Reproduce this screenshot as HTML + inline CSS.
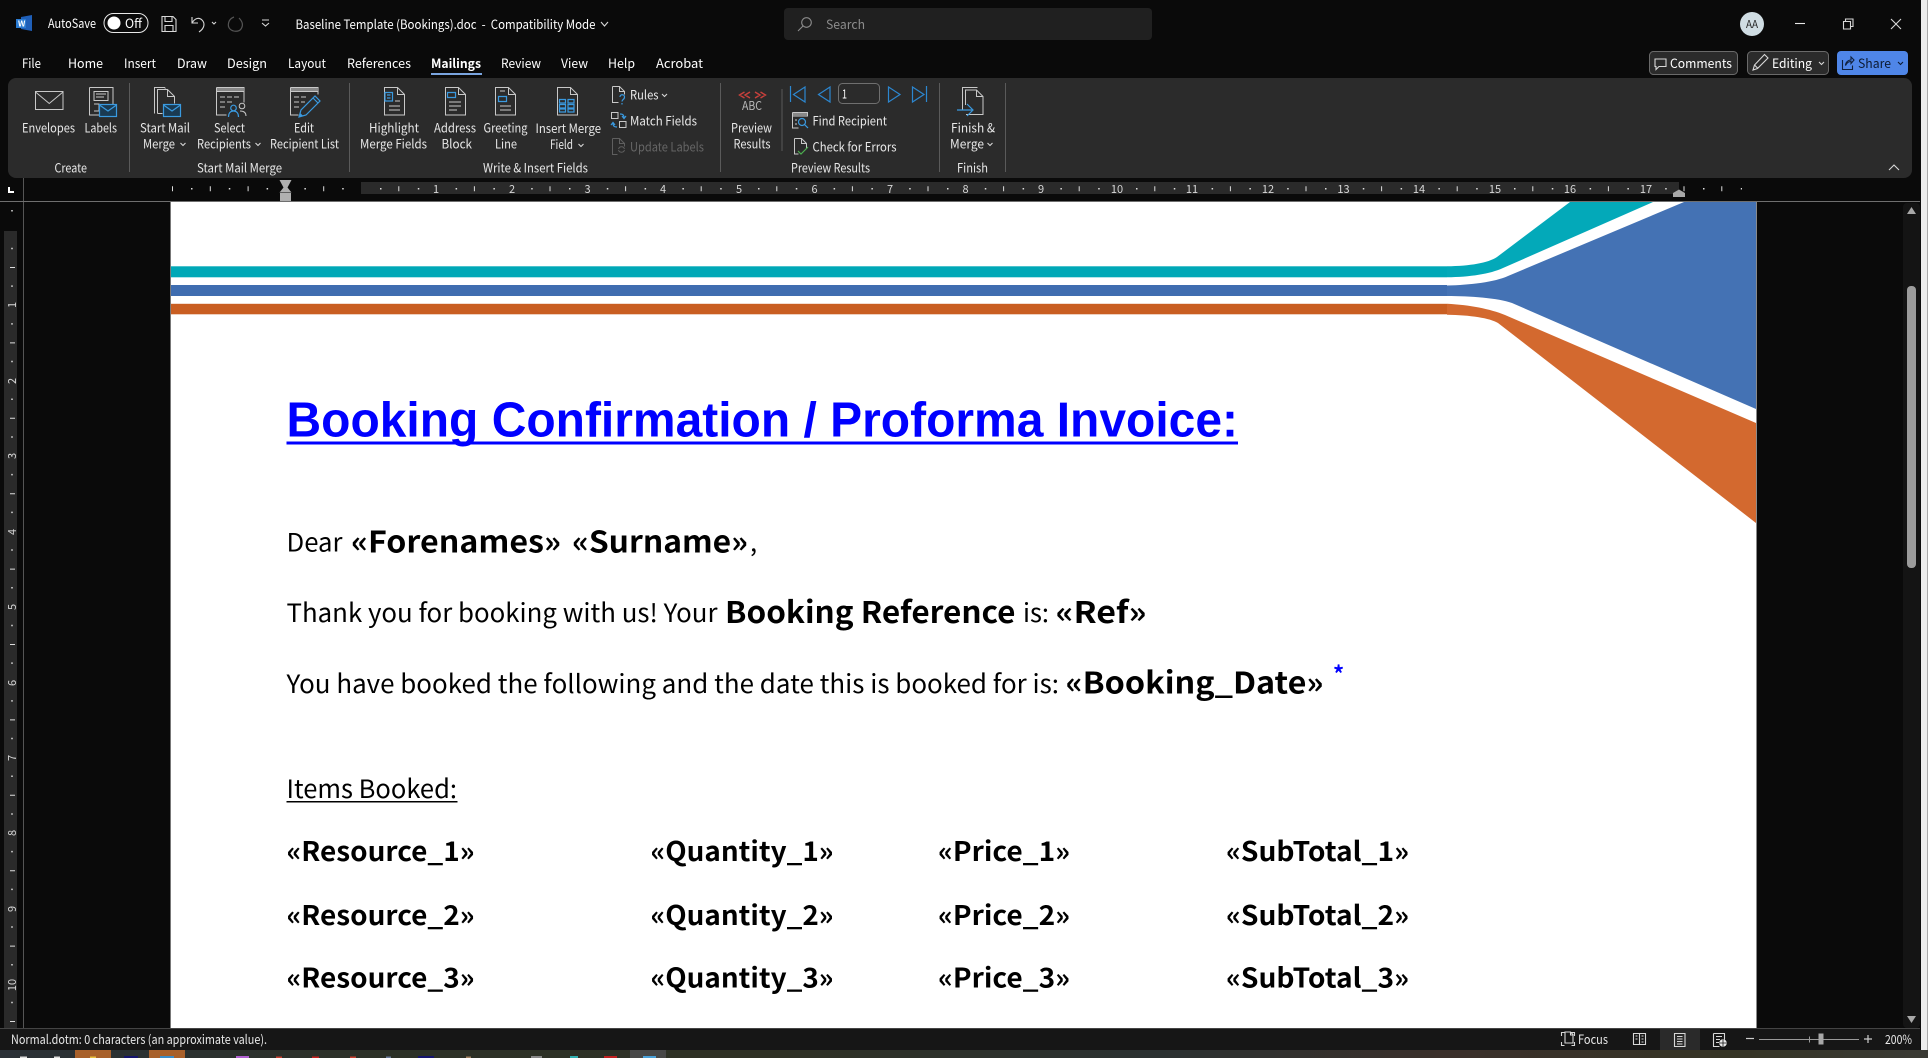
<!DOCTYPE html>
<html lang="en"><head><meta charset="utf-8"><title>Baseline Template (Bookings).doc - Word</title>
<style>
html,body{margin:0;padding:0;background:#0a0a0a;overflow:hidden;width:1928px;height:1058px}
svg{display:block}
text{font-family:"Noto Sans CJK JP","Liberation Sans",sans-serif;fill:#e8e8e8;font-size:12.5px}
.w{fill:#fff}
.g{fill:#8c8c8c}
.d{fill:#666}
.b{font-size:27px;font-weight:700;fill:#000}
.bb{font-size:30px;font-weight:700;fill:#000}
.r{font-size:25.5px;fill:#000}
.n{font-size:11px;fill:#d8d8d8}
.s{fill:none;stroke:#c8c8c8;stroke-width:1}
.u{fill:none;stroke:#3a9ae0;stroke-width:1.2}
.c{fill:none;stroke:#d8d8d8;stroke-width:1.1}
</style></head><body>
<svg xmlns="http://www.w3.org/2000/svg" width="1928" height="1058" viewBox="0 0 1928 1058">
<rect width="1928" height="1058" fill="#0a0a0a"/>
<!-- right desktop edge -->
<rect x="1921" y="0" width="6" height="1050" fill="#ececec"/><rect x="1927" y="0" width="1" height="1050" fill="#a8a8a8"/>
<!-- title bar -->
<path d="M21 17l11-2v16l-11-2z" fill="#1f5fb8"/><rect x="16" y="19" width="10" height="9" fill="#2b7cd3"/>
<text x="18" y="26.5" style="font-size:8px;font-weight:700" class="w">W</text>
<text x="48" y="28" textLength="48" lengthAdjust="spacingAndGlyphs" class="w">AutoSave</text>
<rect x="104" y="13.5" width="44" height="19" rx="9.5" fill="#0a0a0a" stroke="#e8e8e8" stroke-width="1"/>
<circle cx="114" cy="23" r="6.5" fill="#fff"/>
<text x="125" y="28" textLength="17" lengthAdjust="spacingAndGlyphs" class="w">Off</text>
<path class="c" d="M162 16.5h11l3 3v12h-14zM165 16.5v5h7v-5M165 31.5v-6h8v6"/>
<path class="c" d="M192 17v6h6M192 23c3-5 7-6 10-3s3 8-3 12"/>
<path class="c" d="M212 22l2 2 2-2" />
<path d="M234 17c-6 2-7 9-4 12s9 3 11 0 2-7-2-11" fill="none" stroke="#555" stroke-width="1.2"/>
<path class="c" d="M262 20h7M262 23l3.5 3 3.5-3"/>
<text x="295.500" y="29" textLength="300" lengthAdjust="spacingAndGlyphs" class="w">Baseline Template (Bookings).doc &#160;-&#160; Compatibility Mode</text>
<path class="c" d="M601 22l3.500 4 3.500-4"/>
<rect x="784" y="8" width="368" height="32" rx="4" fill="#202020"/>
<circle cx="806.500" cy="22.500" r="4.800" fill="none" stroke="#8c8c8c" stroke-width="1.1"/><path d="M803 26l-5 5" stroke="#8c8c8c" stroke-width="1.1"/>
<text x="826" y="29" textLength="39" lengthAdjust="spacingAndGlyphs" class="g">Search</text>
<circle cx="1752" cy="24" r="12" fill="#d0dde3"/>
<text x="1746" y="28" textLength="12" lengthAdjust="spacingAndGlyphs" style="font-size:10.500px;fill:#222">AA</text>
<path d="M1795 23.500h10" stroke="#e8e8e8" stroke-width="1.1"/>
<path class="c" d="M1843.500 21.500h7v7.500h-7zM1845.500 21.500v-2.500h7.500v7.500h-2.500"/>
<path class="c" d="M1891 19l10 10M1901 19l-10 10"/>
<!-- tabs -->
<g class="w">
<text x="22" y="68" textLength="19" lengthAdjust="spacingAndGlyphs" class="w">File</text>
<text x="68" y="68" textLength="35" lengthAdjust="spacingAndGlyphs" class="w">Home</text>
<text x="124" y="68" textLength="32" lengthAdjust="spacingAndGlyphs" class="w">Insert</text>
<text x="177" y="68" textLength="30" lengthAdjust="spacingAndGlyphs" class="w">Draw</text>
<text x="227" y="68" textLength="40" lengthAdjust="spacingAndGlyphs" class="w">Design</text>
<text x="288" y="68" textLength="38" lengthAdjust="spacingAndGlyphs" class="w">Layout</text>
<text x="347" y="68" textLength="64" lengthAdjust="spacingAndGlyphs" class="w">References</text>
<text x="431" y="68" textLength="50" lengthAdjust="spacingAndGlyphs" class="w" style="font-weight:700">Mailings</text>
<text x="501" y="68" textLength="40" lengthAdjust="spacingAndGlyphs" class="w">Review</text>
<text x="561" y="68" textLength="27" lengthAdjust="spacingAndGlyphs" class="w">View</text>
<text x="608" y="68" textLength="27" lengthAdjust="spacingAndGlyphs" class="w">Help</text>
<text x="656" y="68" textLength="47" lengthAdjust="spacingAndGlyphs" class="w">Acrobat</text>
</g>
<rect x="431" y="73" width="51" height="2" fill="#7aa5e0"/>
<!-- top right buttons -->
<rect x="1649.500" y="51.500" width="88" height="23" rx="4" fill="#2b2b2b" stroke="#6a6a6a"/>
<path class="c" d="M1655 59h11v7.500h-7l-3 3v-3h-1z"/>
<text x="1670" y="68" textLength="62" lengthAdjust="spacingAndGlyphs" class="w">Comments</text>
<rect x="1747.500" y="51.500" width="81" height="23" rx="4" fill="#2b2b2b" stroke="#6a6a6a"/>
<path class="c" d="M1753 70l1.500-5 10-10.500 3.500 3.500-10.500 10.500zM1754.500 65l3.500 3.500"/>
<text x="1772" y="68" textLength="40" lengthAdjust="spacingAndGlyphs" class="w">Editing</text>
<path class="c" d="M1819 62l2.500 2.500 2.500-2.500"/>
<rect x="1837" y="51" width="71" height="24" rx="4" fill="#4f86e8"/>
<path d="M1842.500 60v9.500h10v-4M1845.500 65.500c0-3 2.500-5.500 5.500-5.500v-3l3 3-3 3.500v-2c-2 0-4 1-5.500 4z" fill="none" stroke="#10203c" stroke-width="1.1"/>
<text x="1858" y="68" textLength="33" lengthAdjust="spacingAndGlyphs" style="fill:#0c1a30">Share</text>
<path d="M1898 62l2.500 2.500 2.500-2.500" fill="none" stroke="#0c1a30" stroke-width="1.1"/>
<!-- ribbon -->
<rect x="8" y="78" width="1904" height="100" rx="8" fill="#2b2b2b"/>
<g stroke="#5a5a5a" stroke-width="1"><path d="M129.500 83v89M349.500 83v89M720.500 83v89M939.500 83v89M1005.500 83v89"/></g>
<path d="M782 89v62" stroke="#5a5a5a"/>
<!-- ribbon labels -->
<text x="22" y="132.500" textLength="53" lengthAdjust="spacingAndGlyphs">Envelopes</text>
<text x="84.500" y="132.500" textLength="32.500" lengthAdjust="spacingAndGlyphs">Labels</text>
<text x="140" y="132.500" textLength="50" lengthAdjust="spacingAndGlyphs">Start Mail</text>
<text x="143" y="148.500" textLength="32" lengthAdjust="spacingAndGlyphs">Merge</text>
<text x="214" y="132.500" textLength="31" lengthAdjust="spacingAndGlyphs">Select</text>
<text x="197" y="148.500" textLength="54" lengthAdjust="spacingAndGlyphs">Recipients</text>
<text x="294" y="132.500" textLength="20" lengthAdjust="spacingAndGlyphs">Edit</text>
<text x="270" y="148.500" textLength="69" lengthAdjust="spacingAndGlyphs">Recipient List</text>
<text x="369" y="132.500" textLength="50" lengthAdjust="spacingAndGlyphs">Highlight</text>
<text x="360" y="148.500" textLength="67" lengthAdjust="spacingAndGlyphs">Merge Fields</text>
<text x="434" y="132.500" textLength="42" lengthAdjust="spacingAndGlyphs">Address</text>
<text x="441.500" y="148.500" textLength="30.500" lengthAdjust="spacingAndGlyphs">Block</text>
<text x="483.500" y="132.500" textLength="44" lengthAdjust="spacingAndGlyphs">Greeting</text>
<text x="495" y="148.500" textLength="22" lengthAdjust="spacingAndGlyphs">Line</text>
<text x="535.500" y="133" textLength="65.500" lengthAdjust="spacingAndGlyphs">Insert Merge</text>
<text x="550" y="149" textLength="23" lengthAdjust="spacingAndGlyphs">Field</text>
<text x="630" y="99.500" textLength="28.500" lengthAdjust="spacingAndGlyphs">Rules</text>
<text x="630" y="125.500" textLength="67" lengthAdjust="spacingAndGlyphs">Match Fields</text>
<text x="630" y="151.500" textLength="74" lengthAdjust="spacingAndGlyphs" class="d">Update Labels</text>
<text x="731" y="132.500" textLength="41" lengthAdjust="spacingAndGlyphs">Preview</text>
<text x="733.500" y="148.500" textLength="37" lengthAdjust="spacingAndGlyphs">Results</text>
<text x="812.500" y="125.500" textLength="74.500" lengthAdjust="spacingAndGlyphs">Find Recipient</text>
<text x="812.500" y="151.500" textLength="84" lengthAdjust="spacingAndGlyphs">Check for Errors</text>
<text x="951" y="132.500" textLength="44" lengthAdjust="spacingAndGlyphs">Finish &amp;</text>
<text x="950" y="148.500" textLength="34" lengthAdjust="spacingAndGlyphs">Merge</text>
<text x="54.500" y="172.500" textLength="32.500" lengthAdjust="spacingAndGlyphs">Create</text>
<text x="197" y="172.500" textLength="85" lengthAdjust="spacingAndGlyphs">Start Mail Merge</text>
<text x="483" y="172.500" textLength="105" lengthAdjust="spacingAndGlyphs">Write &amp; Insert Fields</text>
<text x="791" y="172.500" textLength="79" lengthAdjust="spacingAndGlyphs">Preview Results</text>
<text x="957" y="172.500" textLength="31" lengthAdjust="spacingAndGlyphs">Finish</text>
<!-- small chevrons -->
<path class="c" d="M180.500 143l2.500 2.500 2.500-2.500M255.500 143l2.500 2.500 2.500-2.500M578.500 144l2.500 2.500 2.500-2.500M662 94l2.500 2.500 2.500-2.500M987.500 143l2.500 2.500 2.500-2.500M1889 170l5-5 5 5"/>
<!-- icons -->
<g>
<path class="s" d="M35.500 91.500h27.500v18h-27.500zM35.500 92l13.750 11.500L63 92"/>
<path class="s" d="M89.500 87.500h23.500v17M89.500 87.500v27.500h10M94 91.500h14v9h-14zM96 94h10M96 97h8M94 104h5v7h-5"/>
<rect x="99.500" y="104.500" width="17" height="12" fill="#1a3a52" stroke="#3a9ae0" stroke-width="1.2"/><path class="u" d="M99.500 105l8.500 6 8.500-6"/>
<path class="s" d="M154.500 113.500v-26h10l1 1M157.500 113.500v-24h10l7 7v7M167.500 89.500v7h7M157.500 113.500h5"/>
<rect x="163.500" y="104.500" width="17" height="12" fill="#1a3a52" stroke="#3a9ae0" stroke-width="1.2"/><path class="u" d="M163.500 105l8.500 6 8.500-6"/>
<path class="s" d="M216.500 87.500h27.500v15M216.500 87.500v27.500h10M216.500 91.500h27.500M220 97h5M227 97h5M234 97h5M220 102h5M227 102h5M220 107h5"/>
<rect x="217" y="88" width="27" height="3" fill="#888"/>
<circle cx="233.500" cy="108" r="2.800" class="u"/><path class="u" d="M228.500 117c0-4 2-6 5-6s5 2 5 6"/>
<circle cx="242" cy="106" r="2.800" class="s"/><path class="s" d="M240 111c3 0 6 1 6 5"/>
<path class="s" d="M290.500 87.500h27.500v7M290.500 87.500v27.500h8M290.500 91.500h27.500M294 97h5M301 97h5M294 102h5M301 102h4M294 107h5"/>
<rect x="291" y="88" width="27" height="3" fill="#888"/>
<path class="u" d="M299 117l2-7 14-14 5 5-14 14zM313 98l5 5" stroke-width="1.5"/>
<path d="M299 117l1.200-4 2.800 2.800z" fill="#3a9ae0"/>
<path class="s" d="M384.500 87.500h13l7 7v20.500h-20zM397.500 87.500v7h7M389 106h11M389 110h11M395 101h5"/>
<path class="u" d="M385 92.500h7.500v8.500H385zM387 95h3.500M387 98h3.500" fill="#1a3a52"/>
<path class="s" d="M445.500 87.500h13l7 7v20.500h-20zM458.500 87.500v7h7M449 102h12M449 106h12M449 110h8"/>
<path class="u" d="M447.500 92.500h8v5h-8z"/>
<path class="s" d="M495.500 87.500h13l7 7v20.500h-20zM508.500 87.500v7h7M500 91h5M500 106h11M500 110h11"/>
<path class="u" d="M498.500 96.500h8v5h-8z"/>
<path class="s" d="M557.500 87.500h13l7 7v20.500h-20zM570.500 87.500v7h7"/>
<path class="u" d="M559.500 99.500h6v3.500h-6zM568 99.500h6v3.500h-6zM559.500 104.500h6v3.500h-6zM568 104.500h6v3.500h-6zM559.500 109h6v3h-6zM568 109h6v3h-6z"/>
<path class="s" d="M612.500 86.500h7l5 5v3M612.500 86.500v16h6M619.500 86.500v5h5"/>
<path class="u" d="M620 97c0-3 4.500-3 4.500 0s-2.500 2-2.500 4.500M622 103v1.500"/>
<path class="s" d="M611.500 112.500h6.500v6h-6.500zM619.500 121.500h6.500v6h-6.500z"/>
<path class="u" d="M620 114c3 0 4 1 4 4M622 116l2 2.500 2-2.500M617 127c-3 0-4-1-4-4M611 125l2-2.500 2 2.500"/>
<path d="M612.500 138.500h7l5 5v3M612.500 138.500v16h5M619.500 138.500v5h5M618.500 149c1-3 5-3 6 0M624.500 150c-1 3-5 3-6 0" fill="none" stroke="#5f5f5f"/>
<path d="M744.500 92l-5 3 5 3M750 92l-5 3 5 3M755 92l5 3-5 3M760.500 92l5 3-5 3" fill="none" stroke="#c9403c" stroke-width="1.400"/>
<text x="742" y="110" textLength="20" lengthAdjust="spacingAndGlyphs" style="font-size:12px;fill:#b8b8b8">ABC</text>
<g fill="none" stroke="#2c87d0" stroke-width="1.200">
<path d="M790.500 86v16M805 87l-11.500 7.500 11.500 7.500z"/>
<path d="M830 87l-11.500 7.500 11.500 7.500z"/>
<path d="M888.500 87l11.500 7.500-11.500 7.500z"/>
<path d="M912.500 87l11.500 7.500-11.500 7.500zM926.500 86v16"/>
</g>
<rect x="838.500" y="83.500" width="41" height="20" rx="4" fill="#2b2b2b" stroke="#6f6f6f"/>
<text x="842" y="98.500" textLength="5" lengthAdjust="spacingAndGlyphs" class="w">1</text>
<path class="s" d="M792.500 112.500h15v4M792.500 112.500v15.500h6M792.500 116h15M795 120h2M795 124h2"/>
<rect x="793" y="113" width="14" height="3" fill="#888"/>
<circle cx="802" cy="122" r="3.500" class="u"/><path class="u" d="M804.500 124.500l3.500 3.500"/>
<path class="s" d="M794.500 138.500h7l5 5v5M794.500 138.500v15.500h4M801.500 138.500v5h5"/>
<path d="M798 151l3 3 7-7" fill="none" stroke="#4caf50" stroke-width="1.200"/>
<path class="s" d="M962.500 110v-22.500h15M965.500 105v-15h11l6.500 6.500v18h-17M976.500 90v6.500h6.500"/>
<path class="u" d="M957 110h15M967 104l6 6-6 6" stroke-width="1.300"/>
</g>
<!-- horizontal ruler -->
<rect x="361" y="182" width="1318" height="12" fill="#2a2a2a"/>
<line x1="172" x2="361" y1="188.700" y2="188.700" stroke="#ddd" stroke-width="5" stroke-dasharray="1 36.800"/>
<line x1="398.300" x2="1650" y1="188.700" y2="188.700" stroke="#ddd" stroke-width="5" stroke-dasharray="1 74.600"/>
<line x1="1683.500" x2="1730" y1="188.700" y2="188.700" stroke="#ddd" stroke-width="5" stroke-dasharray="1 36.800"/>
<line x1="191" x2="1742" y1="188.700" y2="188.700" stroke="#ddd" stroke-width="1.500" stroke-dasharray="1.500 36.300"/>
<g text-anchor="middle" class="n">
<text x="436" y="193" class="n">1</text><text x="512" y="193" class="n">2</text><text x="587.500" y="193" class="n">3</text><text x="663" y="193" class="n">4</text><text x="739" y="193" class="n">5</text><text x="814.500" y="193" class="n">6</text><text x="890" y="193" class="n">7</text><text x="965.500" y="193" class="n">8</text><text x="1041" y="193" class="n">9</text><text x="1117" y="193" class="n">10</text><text x="1192" y="193" class="n">11</text><text x="1268" y="193" class="n">12</text><text x="1343.500" y="193" class="n">13</text><text x="1419" y="193" class="n">14</text><text x="1495" y="193" class="n">15</text><text x="1570" y="193" class="n">16</text><text x="1646" y="193" class="n">17</text>
</g>
<path d="M279.500 180h12l-4 7.500 4 5h-12l4-5z" fill="#b0b0b0"/><rect x="280" y="193" width="11" height="8" fill="#b0b0b0"/>
<path d="M1673 197v-4l6-3.500 6 3.500v4z" fill="#a8a8a8"/>
<path d="M8 187h2v4h4v2h-6z" fill="#fff"/>
<path d="M23.500 178v24" stroke="#555"/>
<!-- page -->
<rect x="0" y="201" width="1920" height="1" fill="#6f6f6f"/>
<rect x="170" y="202" width="1" height="826" fill="#777"/>
<rect x="171" y="202" width="1585" height="826" fill="#fff"/>
<rect x="1756" y="202" width="1" height="826" fill="#8a8a8a"/>
<!-- banner -->
<rect x="171" y="266.300" width="1276" height="11" fill="#00a8b7"/>
<rect x="171" y="285" width="1276" height="11" fill="#3f6db0"/>
<rect x="171" y="303.800" width="1276" height="10.500" fill="#c95e22"/>
<path d="M1447 266.300C1470 266 1488 263 1497 257L1570 202H1653L1503 268C1490 274 1470 277 1447 277.300Z" fill="#03a9b9"/>
<path d="M1447 285.500C1470 285 1495 282 1508 276L1684 202H1756V409L1512 303C1498 298 1470 296 1447 296Z" fill="#4472b4"/>
<path d="M1447 303.800C1470 305 1490 309 1505 315L1756 423V523L1498 323C1490 318 1470 315 1447 314.700Z" fill="#d3692f"/>
<!-- document text -->
<text x="286.500" y="436.500" textLength="951.500" lengthAdjust="spacingAndGlyphs" style="font-family:'Liberation Sans',sans-serif;font-weight:700;font-size:49px;fill:#0000ff">Booking Confirmation / Proforma Invoice:</text>
<rect x="286.500" y="441.500" width="951.500" height="3" fill="#0000ff"/>
<text x="286.500" y="551.500" textLength="56" lengthAdjust="spacingAndGlyphs" class="r">Dear</text>
<text x="351" y="552.500" textLength="210" lengthAdjust="spacingAndGlyphs" class="bb">«Forenames»</text>
<text x="572" y="552.500" textLength="176" lengthAdjust="spacingAndGlyphs" class="bb">«Surname»</text>
<text x="750" y="551.500" class="r">,</text>
<text x="286.500" y="622" textLength="431" lengthAdjust="spacingAndGlyphs" class="r">Thank you for booking with us! Your</text>
<text x="725" y="623" textLength="290.500" lengthAdjust="spacingAndGlyphs" class="bb">Booking Reference</text>
<text x="1023" y="622" textLength="26" lengthAdjust="spacingAndGlyphs" class="r">is:</text>
<text x="1055.500" y="623" textLength="91" lengthAdjust="spacingAndGlyphs" class="bb">«Ref»</text>
<text x="286.500" y="693" textLength="772.500" lengthAdjust="spacingAndGlyphs" class="r">You have booked the following and the date this is booked for is:</text>
<text x="1065.500" y="693.500" textLength="258" lengthAdjust="spacingAndGlyphs" class="bb">«Booking_Date»</text>
<text x="1333" y="682" style="font-size:22px;font-weight:700;fill:#0000ff">*</text>
<text x="286.500" y="798" textLength="170.500" lengthAdjust="spacingAndGlyphs" class="r">Items Booked:</text>
<rect x="286.500" y="801" width="171" height="1.500" fill="#000"/>
<text x="286.500" y="861" textLength="188" lengthAdjust="spacingAndGlyphs" class="b">«Resource_1»</text>
<text x="650.500" y="861" textLength="183" lengthAdjust="spacingAndGlyphs" class="b">«Quantity_1»</text>
<text x="938" y="861" textLength="132" lengthAdjust="spacingAndGlyphs" class="b">«Price_1»</text>
<text x="1226" y="861" textLength="183" lengthAdjust="spacingAndGlyphs" class="b">«SubTotal_1»</text>
<text x="286.500" y="925" textLength="188" lengthAdjust="spacingAndGlyphs" class="b">«Resource_2»</text>
<text x="650.500" y="925" textLength="183" lengthAdjust="spacingAndGlyphs" class="b">«Quantity_2»</text>
<text x="938" y="925" textLength="132" lengthAdjust="spacingAndGlyphs" class="b">«Price_2»</text>
<text x="1226" y="925" textLength="183" lengthAdjust="spacingAndGlyphs" class="b">«SubTotal_2»</text>
<text x="286.500" y="987.500" textLength="188" lengthAdjust="spacingAndGlyphs" class="b">«Resource_3»</text>
<text x="650.500" y="987.500" textLength="183" lengthAdjust="spacingAndGlyphs" class="b">«Quantity_3»</text>
<text x="938" y="987.500" textLength="132" lengthAdjust="spacingAndGlyphs" class="b">«Price_3»</text>
<text x="1226" y="987.500" textLength="183" lengthAdjust="spacingAndGlyphs" class="b">«SubTotal_3»</text>
<!-- vertical ruler -->
<rect x="4" y="231" width="13" height="797" fill="#2a2a2a"/>
<path d="M23.500 202v826" stroke="#555"/>
<line x1="12.500" x2="12.500" y1="267" y2="1028" stroke="#ddd" stroke-width="5" stroke-dasharray="1 74.400"/>
<line x1="12" x2="12" y1="210" y2="1028" stroke="#ddd" stroke-width="1.500" stroke-dasharray="1.500 36.200"/>
<g>
<text transform="translate(16 305) rotate(-90)" text-anchor="middle" class="n">1</text>
<text transform="translate(16 381) rotate(-90)" text-anchor="middle" class="n">2</text>
<text transform="translate(16 456) rotate(-90)" text-anchor="middle" class="n">3</text>
<text transform="translate(16 532) rotate(-90)" text-anchor="middle" class="n">4</text>
<text transform="translate(16 607) rotate(-90)" text-anchor="middle" class="n">5</text>
<text transform="translate(16 683) rotate(-90)" text-anchor="middle" class="n">6</text>
<text transform="translate(16 758) rotate(-90)" text-anchor="middle" class="n">7</text>
<text transform="translate(16 833) rotate(-90)" text-anchor="middle" class="n">8</text>
<text transform="translate(16 909) rotate(-90)" text-anchor="middle" class="n">9</text>
<text transform="translate(16 985) rotate(-90)" text-anchor="middle" class="n">10</text>
</g>
<!-- scrollbar -->
<rect x="1903" y="203" width="17" height="825" rx="4" fill="#141414"/>
<rect x="1907" y="286" width="9" height="282" rx="4" fill="#9c9c9c"/>
<path d="M1907 214l4.500-7 4.500 7z" fill="#a8a8a8"/>
<path d="M1907 1016l4.500 7 4.500-7z" fill="#a8a8a8"/>
<!-- bottom desktop strip -->
<defs><linearGradient id="bg" x1="0" x2="1" y1="0" y2="0">
<stop offset="0" stop-color="#2a3036"/><stop offset=".2" stop-color="#2b3026"/><stop offset=".4" stop-color="#2e3024"/><stop offset=".6" stop-color="#2a3030"/><stop offset=".75" stop-color="#3a2f2a"/><stop offset=".9" stop-color="#353425"/><stop offset="1" stop-color="#3a3a34"/>
</linearGradient></defs>
<rect x="0" y="1050" width="1928" height="8" fill="url(#bg)"/>
<rect x="75" y="1050" width="36" height="8" fill="#a8602a"/><rect x="149" y="1050" width="36" height="8" fill="#a8602a"/>
<rect x="630" y="1050" width="36" height="8" fill="#474747"/>
<g>
<rect x="20" y="1056.500" width="7" height="1.500" fill="#ddd"/><rect x="54" y="1056.500" width="6" height="1.500" fill="#ddd"/>
<rect x="90" y="1056.500" width="6" height="1.500" fill="#e8c040"/><rect x="124" y="1056" width="14" height="2" fill="#14146e"/>
<rect x="160" y="1056" width="14" height="2" fill="#3a8cc8"/><rect x="236" y="1056" width="13" height="2" fill="#b060d0"/>
<rect x="276" y="1056.500" width="6" height="1.500" fill="#c84030"/><rect x="312" y="1056.500" width="7" height="1.500" fill="#c82020"/>
<rect x="350" y="1056.500" width="6" height="1.500" fill="#c84030"/><rect x="386" y="1056.500" width="5" height="1.500" fill="#6a7a9a"/>
<rect x="418" y="1056" width="16" height="2" fill="#14146e"/><rect x="466" y="1056.500" width="5" height="1.500" fill="#a08060"/>
<rect x="531" y="1056" width="11" height="2" fill="#888"/><rect x="570" y="1056" width="8" height="2" fill="#30b0b0"/>
<rect x="604" y="1056" width="13" height="2" fill="#c02020"/><rect x="643" y="1056" width="13" height="2" fill="#4aa0d8"/>
</g>
<!-- status bar -->
<rect x="0" y="1028" width="1920" height="22" fill="#161616"/>
<rect x="0" y="1028" width="1920" height="1" fill="#444"/>
<text x="11" y="1044" textLength="256" lengthAdjust="spacingAndGlyphs" style="font-size:12.500px;fill:#e8e8e8">Normal.dotm: 0 characters (an approximate value).</text>
<path class="c" d="M1561.500 1036v-3.500h3M1571 1032.500h3.500v3.500M1561.500 1042v3.500h3M1574.500 1042v3.500h-3M1565 1043v-11h5.500l2.500 2.500v8.500zM1570.500 1032v3h3"/>
<text x="1578" y="1044" textLength="30" lengthAdjust="spacingAndGlyphs">Focus</text>
<path class="c" d="M1633.500 1033.500h6v11h-6zM1639.500 1033.500h6v11h-6zM1635.500 1036h2M1635.500 1039h2M1641.500 1036h2M1641.500 1039h2M1641.500 1042h2"/>
<rect x="1660" y="1029" width="40" height="21" fill="#2a2a2a"/>
<path class="c" d="M1674.500 1033.500h10.500v13h-10.500zM1677 1036.500h5.500M1677 1039h5.500M1677 1041.500h5.500M1677 1044h5.500"/>
<path class="c" d="M1713.500 1033.500h11v6M1713.500 1033.500v13h6M1716 1036.500h6M1716 1039.500h4M1716 1042.500h3"/>
<circle cx="1723" cy="1043" r="3.800" fill="#e8e8e8"/><path d="M1719.500 1043h7M1723 1039.500v7" stroke="#161616" stroke-width=".8"/>
<path d="M1746 1038.500h8" stroke="#ccc" stroke-width="1.200"/>
<path d="M1759 1039.500h100" stroke="#9a9a9a"/><path d="M1809.500 1036.500v6" stroke="#9a9a9a"/>
<rect x="1818.500" y="1033.500" width="5" height="11" fill="#a8a8a8"/>
<path d="M1864 1039h8M1868 1035v8" stroke="#ccc" stroke-width="1.200"/>
<text x="1885" y="1044" textLength="27" lengthAdjust="spacingAndGlyphs">200%</text>
</svg>
</body></html>
